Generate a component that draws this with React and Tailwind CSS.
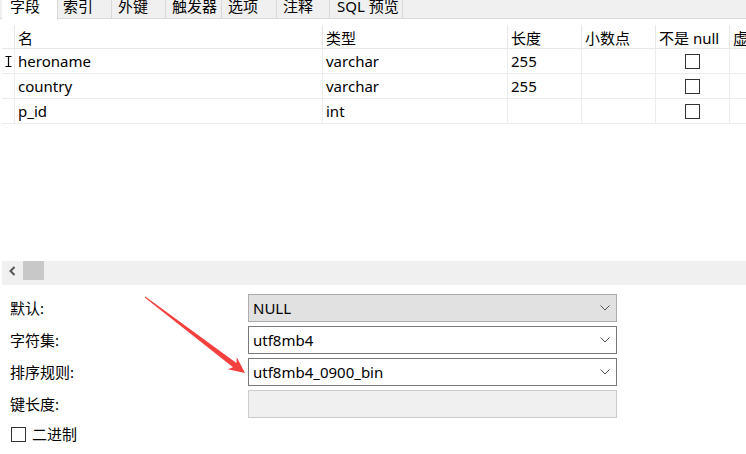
import React from "react";

const tabs = [
  { label: "字段", w: "w-[56px] pl-[8px]", active: true },
  { label: "索引", w: "w-[54px] pl-[5px]" },
  { label: "外键", w: "w-[54px] pl-[6px]" },
  { label: "触发器", w: "w-[56px] pl-[6px]" },
  { label: "选项", w: "w-[55px] pl-[6px]" },
  { label: "注释", w: "w-[53px] pl-[6px]" },
  { label: "SQL 预览", w: "w-[73px] pl-[7px]" },
];

const rows = [
  { name: "heroname", type: "varchar", len: "255", current: true },
  { name: "country", type: "varchar", len: "255" },
  { name: "p_id", type: "int", len: "" },
];

function Chevron() {
  return (
    <svg width="10" height="6" viewBox="0 0 10 6" className="text-[#555]">
      <path d="M0.5 0.5 L5 5 L9.5 0.5" fill="none" stroke="currentColor" strokeWidth="1" />
    </svg>
  );
}

function Select({ value, variant }) {
  const styles = {
    gray: "bg-[#e1e1e1] border-[#adadad]",
    white: "bg-white border-[#7a7a7a]",
    disabled: "bg-[#f0f0f0] border-[#cccccc]",
  };
  return (
    <div className={`w-[369px] h-[28px] shrink-0 border flex items-center justify-between pl-[4px] pr-[6px] ${styles[variant]}`}>
      <span className="text-[15px] leading-[20px] text-black">{value}</span>
      {variant !== "disabled" && <Chevron />}
    </div>
  );
}

function FormRow({ label, children }) {
  return (
    <div className="flex items-center h-[28px]">
      <span className="w-[248px] shrink-0 pl-[10px] text-[15px] leading-[20px] text-black">{label}</span>
      {children}
    </div>
  );
}

export default function App() {
  return (
    <div className="relative w-[746px] h-[454px] overflow-hidden bg-white font-[family-name:'Noto_Sans','Noto_Sans_CJK_SC',sans-serif]">
      {/* tab strip */}
      <div className="h-[19px] bg-[#f0f0f0] border-b border-[#d9d9d9] flex pl-[2px]">
        {tabs.map((t) => (
          <div
            key={t.label}
            className={`${t.w} shrink-0 h-[19px] border-r border-[#d9d9d9] overflow-hidden flex ${t.active ? "bg-white h-[20px] relative z-10" : ""}`}
          >
            <span className="text-[15px] leading-[15px] -mt-[1px] text-black whitespace-nowrap">{t.label}</span>
          </div>
        ))}
      </div>

      {/* grid */}
      <div className="pl-[2px] pt-[5px] h-[242px]">
        <div className="flex h-[25px] border-b border-[#e8e8e8] text-[15px] leading-[20px] text-black">
          <div className="w-[13px] border-r border-[#e8e8e8] mt-[1px]" />
          <div className="w-[308px] border-r border-[#e8e8e8] pl-[3px] pt-[3px] mt-[1px]">名</div>
          <div className="w-[185px] border-r border-[#e8e8e8] pl-[3px] pt-[3px] mt-[1px]">类型</div>
          <div className="w-[74px] border-r border-[#e8e8e8] pl-[3px] pt-[3px] mt-[1px]">长度</div>
          <div className="w-[74px] border-r border-[#e8e8e8] pl-[3px] pt-[3px] mt-[1px]">小数点</div>
          <div className="w-[74px] border-r border-[#e8e8e8] pl-[3px] pt-[3px] mt-[1px] whitespace-nowrap">不是 null</div>
          <div className="flex-1 pl-[3px] pt-[3px] mt-[1px] whitespace-nowrap overflow-hidden">虚拟</div>
        </div>
        {rows.map((r) => (
          <div key={r.name} className="flex h-[25px] border-b border-[#ececec] text-[15px] leading-[24px] text-black">
            <div className="w-[13px] border-r border-[#ececec] flex items-center justify-center pl-[1px]">
              {r.current && (
                <svg width="7" height="11" viewBox="0 0 7 11">
                  <path d="M0.5 0.5 H6.5 M3.5 0.5 V10.5 M0.5 10.5 H6.5" stroke="#000" strokeWidth="1.2" fill="none" />
                </svg>
              )}
            </div>
            <div className="w-[308px] border-r border-[#ececec] pl-[3px]">{r.name}</div>
            <div className="w-[185px] border-r border-[#ececec] pl-[3px]">{r.type}</div>
            <div className="w-[74px] border-r border-[#ececec] pl-[3px]">{r.len}</div>
            <div className="w-[74px] border-r border-[#ececec]" />
            <div className="w-[74px] border-r border-[#ececec] flex items-center justify-center">
              <div className="w-[15px] h-[15px] border border-[#333] bg-white" />
            </div>
            <div className="flex-1" />
          </div>
        ))}
      </div>

      {/* horizontal scrollbar */}
      <div className="ml-[2px] h-[24px] bg-[#f0f0f0] flex items-start">
        <div className="w-[21px] h-[20px] flex items-center justify-center">
          <svg width="7" height="10" viewBox="0 0 7 10">
            <path d="M5.5 1 L1.5 5 L5.5 9" fill="none" stroke="#555" strokeWidth="2" />
          </svg>
        </div>
        <div className="w-[21px] h-[19px] bg-[#c8c8c8]" />
      </div>

      {/* column properties */}
      <div className="pt-[9px] flex flex-col gap-[4px]">
        <FormRow label="默认:">
          <Select value="NULL" variant="gray" />
        </FormRow>
        <FormRow label="字符集:">
          <Select value="utf8mb4" variant="white" />
        </FormRow>
        <FormRow label="排序规则:">
          <Select value="utf8mb4_0900_bin" variant="white" />
        </FormRow>
        <FormRow label="键长度:">
          <Select value="" variant="disabled" />
        </FormRow>
        <div className="flex items-center gap-[6px] pl-[11px] mt-[2px] h-[20px]">
          <div className="w-[15px] h-[15px] border border-[#333] bg-white" />
          <span className="text-[15px] leading-[20px] text-black">二进制</span>
        </div>
      </div>

      {/* red annotation arrow */}
      <svg className="absolute left-0 top-0 pointer-events-none" width="746" height="454">
        <polygon
          points="144.7,297.4 233,367.3 227.8,369.3 245,373 236.8,357.3 236.4,362.9 145.3,296.6"
          fill="#f43f3f"
        />
      </svg>
    </div>
  );
}
